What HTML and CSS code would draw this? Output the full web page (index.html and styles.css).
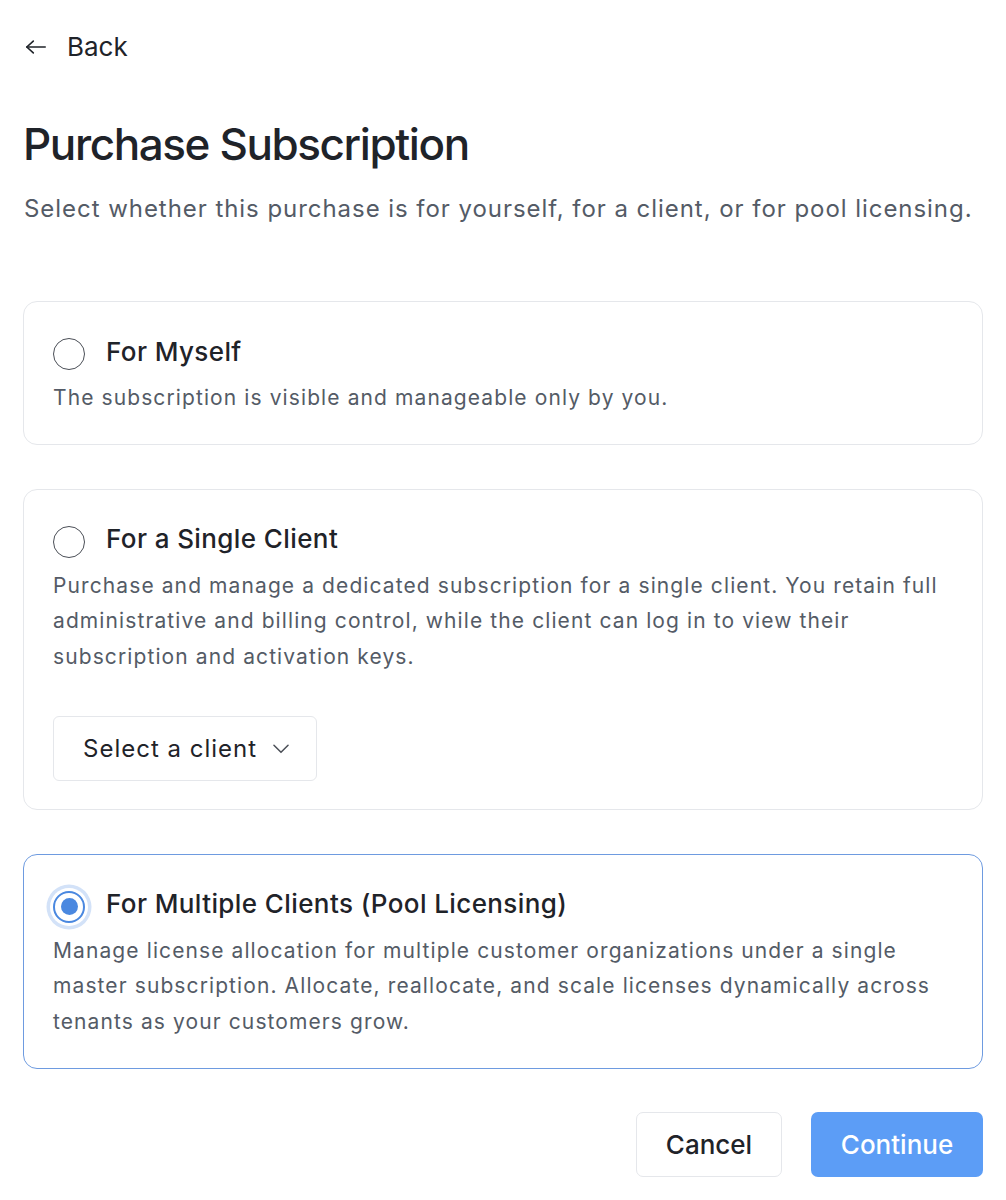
FILE: index.html
```html
<!DOCTYPE html>
<html lang="en">
<head>
<meta charset="utf-8">
<title>Purchase Subscription</title>
<link rel="stylesheet" href="styles.css">
</head>
<body>
<main class="page">
  <a class="back" href="#">
    <svg class="back-icon" viewBox="0 0 24 24" width="26" height="26" fill="none" stroke="currentColor" stroke-width="1.5" stroke-linecap="round" stroke-linejoin="round"><path d="M20.5 12H3.5"/><path d="M9.5 6.5L3.5 12l6 5.5"/></svg>
    <span>Back</span>
  </a>
  <h1 class="title">Purchase Subscription</h1>
  <p class="subtitle">Select whether this purchase is for yourself, for a client, or for pool licensing.</p>

  <div class="options">
    <div class="card">
      <div class="card-head">
        <span class="radio"></span>
        <span class="card-title">For Myself</span>
      </div>
      <p class="card-desc">The subscription is visible and manageable only by you.</p>
    </div>

    <div class="card">
      <div class="card-head">
        <span class="radio"></span>
        <span class="card-title">For a Single Client</span>
      </div>
      <p class="card-desc">Purchase and manage a dedicated subscription for a single client. You retain full administrative and billing control, while the client can log in to view their subscription and activation keys.</p>
      <button class="select" type="button">
        <span>Select a client</span>
        <svg viewBox="0 0 24 24" width="26" height="26" fill="none" stroke="currentColor" stroke-width="1.4" stroke-linecap="round" stroke-linejoin="round"><path d="M5.5 9.5l6.5 6.5 6.5-6.5"/></svg>
      </button>
    </div>

    <div class="card card-selected">
      <div class="card-head">
        <span class="radio radio-on"></span>
        <span class="card-title">For Multiple Clients (Pool Licensing)</span>
      </div>
      <p class="card-desc">Manage license allocation for multiple customer organizations under a single master subscription. Allocate, reallocate, and scale licenses dynamically across tenants as your customers grow.</p>
    </div>
  </div>

  <div class="actions">
    <button class="btn btn-cancel" type="button">Cancel</button>
    <button class="btn btn-continue" type="button">Continue</button>
  </div>
</main>
</body>
</html>
```

FILE: styles.css
```css
* { box-sizing: border-box; }
html, body { margin: 0; padding: 0; background: #fff; }
body {
  font-family: Inter, "Noto Sans", "Liberation Sans", sans-serif;
  color: #1f2329;
}
.page {
  padding: 30px 23px 24px 23px;
}
.back {
  display: inline-flex;
  align-items: center;
  gap: 18px;
  color: #1f2329;
  text-decoration: none;
  font-size: 26px;
  line-height: 34px;
}
.title {
  margin: 54px 0 0;
  font-size: 44px;
  font-weight: 500;
  line-height: 52px;
  letter-spacing: -1.4px;
  color: #1f2329;
}
.subtitle {
  margin: 23px 0 0 1px;
  font-size: 24px;
  line-height: 32px;
  letter-spacing: 0.95px;
  color: #545b66;
}
.options {
  margin-top: 76px;
  display: flex;
  flex-direction: column;
  gap: 43.5px;
}
.card {
  border: 1px solid #e5e7eb;
  border-radius: 14px;
  padding: 29px 29px 28.5px 29px;
}
.card-selected { border-color: #6e9be0; }
.card-head {
  display: flex;
  align-items: center;
  gap: 21px;
  height: 40px;
}
.radio {
  width: 32px;
  height: 32px;
  margin-top: 6px;
  border-radius: 50%;
  border: 1.5px solid #4b4f57;
  flex: none;
  background: #fff;
}
.radio-on {
  border: 2px solid #4a88e0;
  box-shadow: 0 0 0 3px #fff, 0 0 0 6.5px #d3e2f8;
  display: flex;
  align-items: center;
  justify-content: center;
}
.radio-on::after {
  content: "";
  width: 17px;
  height: 17px;
  border-radius: 50%;
  background: #4a88e0;
}
.card-title {
  font-size: 26px;
  font-weight: 500;
  letter-spacing: 0.4px;
  color: #1f2329;
}
.card-desc {
  margin: 9px 0 0;
  font-size: 21px;
  line-height: 35.5px;
  letter-spacing: 1.1px;
  color: #545b66;
}
.select {
  margin-top: 41.5px;
  display: inline-flex;
  align-items: center;
  gap: 11px;
  height: 65px;
  padding: 0 22px 0 29px;
  border: 1px solid #e5e7eb;
  border-radius: 6px;
  background: #fff;
  font-family: inherit;
  font-size: 24px;
  letter-spacing: 1px;
  color: #1f2329;
}
.select svg { color: #4b4f57; }
.actions {
  margin-top: 43px;
  display: flex;
  justify-content: flex-end;
  gap: 29px;
}
.btn {
  height: 65px;
  border-radius: 7px;
  font-family: inherit;
  font-size: 26px;
  font-weight: 500;
}
.btn-cancel {
  width: 146px;
  border: 1px solid #e5e7eb;
  background: #fff;
  color: #1f2329;
}
.btn-continue {
  width: 172px;
  border: none;
  background: #5c9df6;
  color: #fff;
}
```
